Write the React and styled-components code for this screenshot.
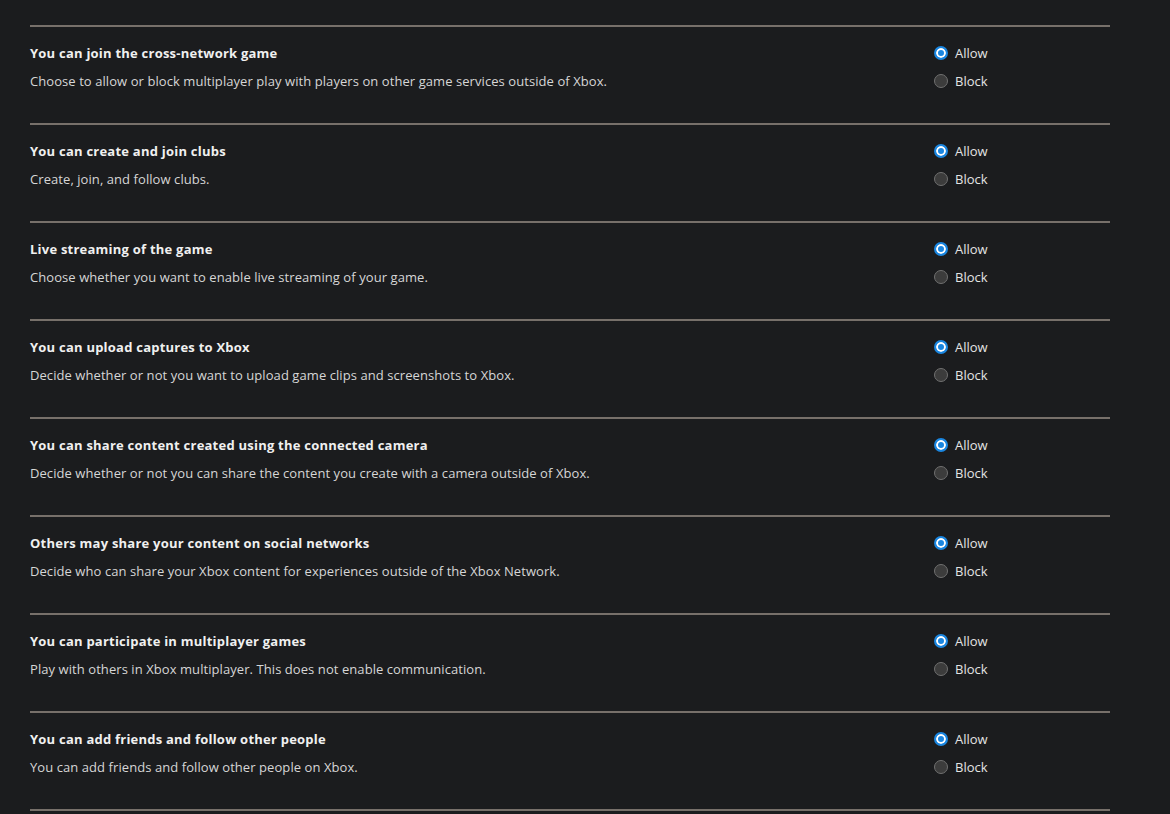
import React from 'react';
import styled, { createGlobalStyle, css } from 'styled-components';

const SETTINGS = [
  {
    title: 'You can join the cross-network game',
    text: 'Choose to allow or block multiplayer play with players on other game services outside of Xbox.'
  },
  { title: 'You can create and join clubs', text: 'Create, join, and follow clubs.' },
  {
    title: 'Live streaming of the game',
    text: 'Choose whether you want to enable live streaming of your game.'
  },
  {
    title: 'You can upload captures to Xbox',
    text: 'Decide whether or not you want to upload game clips and screenshots to Xbox.'
  },
  {
    title: 'You can share content created using the connected camera',
    text: 'Decide whether or not you can share the content you create with a camera outside of Xbox.'
  },
  {
    title: 'Others may share your content on social networks',
    text: 'Decide who can share your Xbox content for experiences outside of the Xbox Network.'
  },
  {
    title: 'You can participate in multiplayer games',
    text: 'Play with others in Xbox multiplayer. This does not enable communication.'
  },
  {
    title: 'You can add friends and follow other people',
    text: 'You can add friends and follow other people on Xbox.'
  }
];

const GlobalStyle = createGlobalStyle`
  body {
    margin: 0;
    background: #1b1c1e;
    font-family: "Open Sans", "Liberation Sans", sans-serif;
  }
`;

const Page = styled.div`
  padding: 25px 60px 0 30px;
  width: 1080px;
`;

const Section = styled.section`
  display: flex;
  justify-content: space-between;
  border-top: 2px solid #77706a;
  padding: 16px 0 32px;

  &:last-child {
    padding: 0;
    height: 10px;
  }
`;

const Info = styled.div`
  display: flex;
  flex-direction: column;
  gap: 8px;
`;

const Title = styled.div`
  font-size: 13px;
  line-height: 20px;
  font-weight: 700;
  color: #f0f0f0;
  letter-spacing: 0.23px;
`;

const Text = styled.div`
  font-size: 13px;
  line-height: 20px;
  color: #d6d6d6;
  letter-spacing: 0.07px;
`;

const Options = styled.div`
  display: flex;
  flex-direction: column;
  gap: 8px;
  width: 176px;
`;

const Option = styled.label`
  display: flex;
  align-items: center;
  gap: 7px;
  height: 20px;
  font-size: 13px;
  color: #e4e4e4;
`;

const Dot = styled.span`
  box-sizing: border-box;
  width: 14px;
  height: 14px;
  border-radius: 50%;

  ${props =>
    props.checked
      ? css`
          background: #1a86e0;
          border: 2px solid #1a86e0;
          box-shadow: inset 0 0 0 2px #ffffff;
        `
      : css`
          background: #3c3c3c;
          border: 1px solid #707070;
        `}
`;

function Setting({ title, text }) {
  return (
    <Section>
      <Info>
        <Title>{title}</Title>
        <Text>{text}</Text>
      </Info>
      <Options>
        <Option>
          <Dot checked />
          Allow
        </Option>
        <Option>
          <Dot />
          Block
        </Option>
      </Options>
    </Section>
  );
}

export default function App() {
  return (
    <Page>
      <GlobalStyle />
      {SETTINGS.map(s => (
        <Setting key={s.title} title={s.title} text={s.text} />
      ))}
      <Section />
    </Page>
  );
}
